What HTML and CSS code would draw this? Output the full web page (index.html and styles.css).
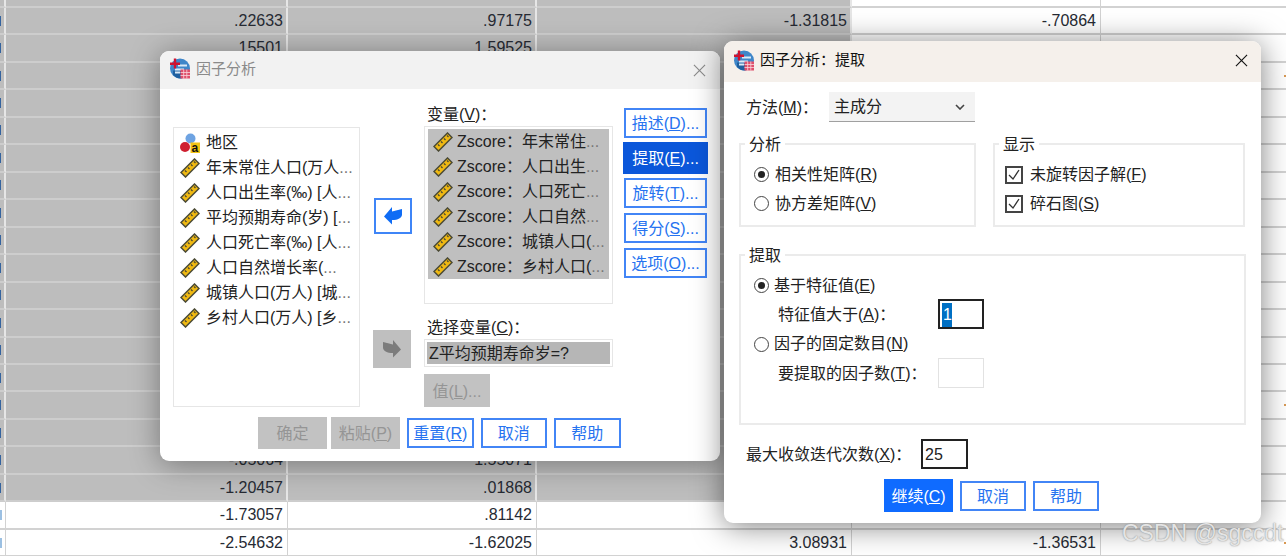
FILE: index.html
```html
<!DOCTYPE html>
<html lang="zh">
<head>
<meta charset="utf-8">
<title>因子分析</title>
<link rel="stylesheet" href="styles.css">
</head>
<body>
<svg class="sprite" aria-hidden="true">
  <symbol id="ruler" viewBox="0 0 20 20">
    <path d="M1 14.500 14.500 1l4.500 4.500L5.500 19z" fill="#f0b912" stroke="#4b4a35" stroke-width="1.500"/>
    <path d="M5 12.500l1.500 1.500M8 9.500l1.500 1.500M11 6.500l1.500 1.500M14 3.500l1.500 1.500" stroke="#4b4a35" stroke-width="1.300" fill="none"/>
  </symbol>
  <symbol id="nominal" viewBox="0 0 20 20">
    <circle cx="10.500" cy="5.500" r="5" fill="#6ea3e2"/>
    <circle cx="5" cy="14" r="5" fill="#cf1f30"/>
    <rect x="10.500" y="9.500" width="9.500" height="10.500" fill="#f3c414"/>
    <text x="11.500" y="18.500" font-size="12" font-weight="700" font-family="Liberation Sans" fill="#111">a</text>
  </symbol>
  <symbol id="app" viewBox="0 0 20 20">
    <circle cx="10" cy="10" r="10" fill="#3f86c9"/>
    <path d="M3 16a10 10 0 0 0 9 3.800V12H3z" fill="#1f5f9f"/>
    <path d="M8 6h9v2H8zM5 10h9v2H5zM5 13h5v2H5z" fill="#dbe9f6"/>
    <path d="M0 4h10v2.400H0zM3.800 0h2.400v10H3.800z" fill="#cf1230"/>
    <rect x="10.500" y="11" width="9.500" height="9" fill="#df4f6b"/>
    <path d="M10.500 14h9.500M10.500 17h9.500M13.700 11v9M16.800 11v9" stroke="#f7d5dc" stroke-width=".8"/>
  </symbol>
  <symbol id="back" viewBox="0 0 38 36">
    <path d="M10 18.500 18 9v4.500l10-2.500v5.500c0 3.500-4 5.500-10 5.500v4.500z"/>
  </symbol>
</svg>

<main class="sheet">
  <div class="row sel"><i class="c0"></i><i></i><i></i><i></i><i class="plain"></i><i class="plain"></i></div>
  <div class="row sel"><i class="c0"><b class="mark"></b></i><i>.22633</i><i>.97175</i><i>-1.31815</i><i class="plain">-.70864</i><i class="plain"></i></div>
  <div class="row sel"><i class="c0"><b class="mark"></b></i><i>.15501</i><i>1.59525</i><i></i><i class="plain"></i><i class="plain"></i></div>
  <div class="row sel"><i class="c0"><b class="mark"></b></i><i></i><i></i><i></i><i class="plain"></i><i class="plain"><b class="tick"></b></i></div>
  <div class="row sel"><i class="c0"><b class="mark"></b></i><i></i><i></i><i></i><i class="plain"></i><i class="plain"></i></div>
  <div class="row sel"><i class="c0"><b class="mark"></b></i><i></i><i></i><i></i><i class="plain"></i><i class="plain"></i></div>
  <div class="row sel"><i class="c0"><b class="mark"></b></i><i></i><i></i><i></i><i class="plain"></i><i class="plain"></i></div>
  <div class="row sel"><i class="c0"><b class="mark"></b></i><i></i><i></i><i></i><i class="plain"></i><i class="plain"></i></div>
  <div class="row sel"><i class="c0"><b class="mark"></b></i><i></i><i></i><i></i><i class="plain"></i><i class="plain"></i></div>
  <div class="row sel"><i class="c0"><b class="mark"></b></i><i></i><i></i><i></i><i class="plain"></i><i class="plain"></i></div>
  <div class="row sel"><i class="c0"><b class="mark"></b></i><i></i><i></i><i></i><i class="plain"></i><i class="plain"></i></div>
  <div class="row sel"><i class="c0"><b class="mark"></b></i><i></i><i></i><i></i><i class="plain"></i><i class="plain"></i></div>
  <div class="row sel"><i class="c0"><b class="mark"></b></i><i></i><i></i><i></i><i class="plain"></i><i class="plain"></i></div>
  <div class="row sel"><i class="c0"><b class="mark"></b></i><i></i><i></i><i></i><i class="plain"></i><i class="plain"></i></div>
  <div class="row sel"><i class="c0"><b class="mark"></b></i><i></i><i></i><i></i><i class="plain"></i><i class="plain"></i></div>
  <div class="row sel"><i class="c0"><b class="mark"></b></i><i></i><i></i><i></i><i class="plain"></i><i class="plain"><b class="tick"></b></i></div>
  <div class="row sel"><i class="c0"><b class="mark"></b></i><i></i><i></i><i></i><i class="plain"></i><i class="plain"></i></div>
  <div class="row sel"><i class="c0"><b class="mark"></b></i><i>-.05064</i><i>1.55071</i><i></i><i class="plain"></i><i class="plain"></i></div>
  <div class="row sel"><i class="c0"><b class="mark"></b></i><i>-1.20457</i><i>.01868</i><i></i><i class="plain"></i><i class="plain"></i></div>
  <div class="row"><i class="c0"><b class="mark"></b></i><i>-1.73057</i><i>.81142</i><i></i><i></i><i></i></div>
  <div class="row"><i class="c0"><b class="mark"></b></i><i>-2.54632</i><i>-1.62025</i><i>3.08931</i><i>-1.36531</i><i><b class="tick"></b></i></div>
</main>

<section class="dialog main-dialog">
  <header class="titlebar inactive">
    <svg class="app-icon"><use href="#app"/></svg>
    <span class="title">因子分析</span>
    <svg class="close" viewBox="0 0 14 14"><path d="M1 1l12 12M13 1 1 13"/></svg>
  </header>
  <div class="fa-body">
    <ul class="listbox source">
      <li><svg class="var"><use href="#nominal"/></svg>地区</li>
      <li><svg class="var"><use href="#ruler"/></svg>年末常住人口(万人<em>...</em></li>
      <li><svg class="var"><use href="#ruler"/></svg>人口出生率(‰) [人<em>...</em></li>
      <li><svg class="var"><use href="#ruler"/></svg>平均预期寿命(岁) [<em>...</em></li>
      <li><svg class="var"><use href="#ruler"/></svg>人口死亡率(‰) [人<em>...</em></li>
      <li><svg class="var"><use href="#ruler"/></svg>人口自然增长率(<em>...</em></li>
      <li><svg class="var"><use href="#ruler"/></svg>城镇人口(万人) [城<em>...</em></li>
      <li><svg class="var"><use href="#ruler"/></svg>乡村人口(万人) [乡<em>...</em></li>
    </ul>
    <div class="arrows">
      <button class="arrow on"><svg><use href="#back"/></svg></button>
      <button class="arrow off"><svg class="flip"><use href="#back"/></svg></button>
    </div>
    <div class="vars">
      <div class="lbl">变量(<u>V</u>)：</div>
      <ul class="listbox target">
        <li><svg class="var"><use href="#ruler"/></svg>Zscore：年末常住<em>...</em></li>
        <li><svg class="var"><use href="#ruler"/></svg>Zscore：人口出生<em>...</em></li>
        <li><svg class="var"><use href="#ruler"/></svg>Zscore：人口死亡<em>...</em></li>
        <li><svg class="var"><use href="#ruler"/></svg>Zscore：人口自然<em>...</em></li>
        <li><svg class="var"><use href="#ruler"/></svg>Zscore：城镇人口(<em>...</em></li>
        <li><svg class="var"><use href="#ruler"/></svg>Zscore：乡村人口(<em>...</em></li>
      </ul>
      <div class="lbl second">选择变量(<u>C</u>)：</div>
      <div class="selection"><span>Z平均预期寿命岁=?</span></div>
      <button class="btn dis value">值(<u>L</u>)...</button>
    </div>
    <div class="side">
      <button class="btn side-btn">描述(<u>D</u>)...</button>
      <button class="btn side-btn active">提取(<u>E</u>)...</button>
      <button class="btn side-btn">旋转(<u>T</u>)...</button>
      <button class="btn side-btn">得分(<u>S</u>)...</button>
      <button class="btn side-btn">选项(<u>O</u>)...</button>
    </div>
  </div>
  <footer class="fa-foot">
    <button class="btn dis wide first">确定</button>
    <button class="btn dis wide">粘贴(<u>P</u>)</button>
    <button class="btn norm">重置(<u>R</u>)</button>
    <button class="btn norm">取消</button>
    <button class="btn norm">帮助</button>
  </footer>
</section>

<section class="dialog sub-dialog">
  <header class="titlebar focus">
    <svg class="app-icon"><use href="#app"/></svg>
    <span class="title">因子分析：提取</span>
    <svg class="close dark" viewBox="0 0 14 14"><path d="M1 1l12 12M13 1 1 13"/></svg>
  </header>
  <div class="ex-body">
    <div class="method">
      <span class="method-lbl">方法(<u>M</u>)：</span>
      <div class="dropdown">主成分<svg viewBox="0 0 10 6"><path d="M1 1l4 4 4-4"/></svg></div>
    </div>
    <div class="groups">
      <div class="group g-analysis">
        <div class="legend">分析</div>
        <div class="opts">
          <div class="opt"><span class="radio on"></span>相关性矩阵(<u>R</u>)</div>
          <div class="opt"><span class="radio"></span>协方差矩阵(<u>V</u>)</div>
        </div>
      </div>
      <div class="group g-display">
        <div class="legend">显示</div>
        <div class="opts">
          <div class="opt"><svg class="check" viewBox="0 0 18 18"><path class="box" d="M1 1h16v16H1z"/><path d="M4 9l4 4 6-9"/></svg>未旋转因子解(<u>F</u>)</div>
          <div class="opt"><svg class="check" viewBox="0 0 18 18"><path class="box" d="M1 1h16v16H1z"/><path d="M4 9l4 4 6-9"/></svg>碎石图(<u>S</u>)</div>
        </div>
      </div>
    </div>
    <div class="group g-extract">
      <div class="legend">提取</div>
      <div class="ex-rows">
        <div class="opt tight"><span class="radio on"></span>基于特征值(<u>E</u>)</div>
        <div class="opt indent"><span class="ex-lbl">特征值大于(<u>A</u>)：</span><span class="field strong"><span class="hl">1</span></span></div>
        <div class="opt tight"><span class="radio"></span>因子的固定数目(<u>N</u>)</div>
        <div class="opt indent"><span class="ex-lbl">要提取的因子数(<u>T</u>)：</span><span class="field"></span></div>
      </div>
    </div>
    <div class="iter">
      <span class="iter-lbl">最大收敛迭代次数(<u>X</u>)：</span><span class="field strong">25</span>
    </div>
    <footer class="ex-foot">
      <button class="btn primary">继续(<u>C</u>)</button>
      <button class="btn norm">取消</button>
      <button class="btn norm">帮助</button>
    </footer>
  </div>
</section>

<div class="watermark">CSDN @sgccdt</div>
</body>
</html>
```

FILE: styles.css
```css
* { box-sizing: border-box; }

html, body {
  margin: 0;
  height: 556px;
  overflow: hidden;
  background: #fff;
}

body {
  position: relative;
  width: 1286px;
  font: 16px/20px "Liberation Sans", "Noto Sans CJK SC", sans-serif;
  color: #222;
}

.sprite { display: none; }

/* Data sheet behind the dialogs */
.sheet {
  margin-top: -19.6px;
  display: grid;
  grid-auto-rows: 27.47px;
}

.row {
  display: grid;
  grid-template-columns: 6px 282px 249px 315px 249px 1fr;
}

.row i {
  font-style: normal;
  display: flex;
  align-items: center;
  justify-content: flex-end;
  padding-right: 4px;
  overflow: hidden;
  white-space: nowrap;
  border-right: 1px solid #d2d2d2;
  border-bottom: 2px solid #d2d2d2;
  background: #fff;
  color: #262a33;
}

.row .c0 {
  padding-right: 0;
  justify-content: flex-start;
}

.row.sel i {
  padding-right: 3px;
  background: #bdbdbd;
  border-right: 2px solid #e6e6e6;
  border-bottom-color: #cdcdcd;
}

.row.sel .plain {
  padding-right: 4px;
  background: #fff;
  border-right: 1px solid #d2d2d2;
  border-bottom-color: #d2d2d2;
}

.row i:last-child,
.row.sel i:last-child {
  border-right: 0;
  padding-right: 0;
}

.mark {
  width: 1.5px;
  height: 10px;
  background: #9cc0e2;
}

.sel .mark { background: #34639f; }

.tick {
  width: 2px;
  height: 2px;
  background: #d99a55;
}

/* Dialog windows */
.dialog {
  position: absolute;
  background: #fff;
  border-radius: 9px;
  overflow: hidden;
  box-shadow: 0 3px 30px rgba(0, 0, 0, .38);
}

.main-dialog {
  left: 160px;
  top: 51px;
  width: 560px;
  height: 410px;
}

.sub-dialog {
  left: 724px;
  top: 41px;
  width: 537px;
  height: 482px;
  box-shadow: 0 3px 30px rgba(0, 0, 0, .5);
}

.titlebar {
  display: flex;
  align-items: center;
  font-size: 15px;
}

.titlebar.inactive {
  height: 38px;
  background: #f2f2f2;
  color: #8a8a8a;
  padding: 0 14px 3px 10px;
}

.titlebar.focus {
  height: 41px;
  background: #f5f0eb;
  color: #111;
  padding: 0 13px 3px 10px;
}

.app-icon {
  width: 20px;
  height: 21px;
  margin-right: 6px;
  flex: none;
}

.title { flex: 1; }

.close {
  width: 13px;
  height: 13px;
  margin-top: 3px;
  fill: none;
  stroke: #8a8a8a;
  stroke-width: 1.2;
}

.close.dark {
  margin-top: 1px;
  stroke: #111;
}

/* Main dialog */
.fa-body {
  display: flex;
  align-items: flex-start;
  height: 318px;
  padding: 16px 0 0 13px;
}

.listbox {
  list-style: none;
  margin: 0;
  background: #fff;
  border: 1.5px solid #e6e6e6;
}

.listbox li {
  display: flex;
  align-items: center;
  height: 25px;
  padding-top: 1.5px;
  white-space: nowrap;
  overflow: hidden;
}

.listbox em { font-style: normal; color: #777; }

.var {
  width: 20px;
  height: 20px;
  margin-right: 6px;
  flex: none;
}

.source {
  width: 187px;
  height: 280px;
  margin-top: 22px;
  padding: 1.5px 0 0 6px;
}

.arrows {
  width: 39px;
  margin-left: 13px;
  display: flex;
  flex-direction: column;
  gap: 96px;
  padding-top: 93px;
}

.arrow {
  display: block;
  padding: 0;
  height: 36px;
  width: 38px;
  background: #fff;
}

.arrow svg { display: block; width: 100%; height: 100%; }

.arrow.on {
  margin-left: 1px;
  border: 2px solid #3f85f7;
  fill: #0f6cf5;
}

.arrow.on svg { margin: -2px; width: 38px; height: 36px; }

.arrow.off {
  border: 0;
  height: 38px;
  background: #bfbfbf;
  fill: #7c7c7c;
}

.flip { transform: scaleX(-1); }

.vars {
  width: 189px;
  margin-left: 12px;
}

.lbl {
  height: 21px;
  padding-left: 3px;
}

.lbl.second {
  height: 21px;
  margin-top: 14px;
}

.target {
  width: 189px;
  height: 178px;
  padding: 2px 3px;
}

.target li {
  background: #bfbfbf;
  padding-left: 5px;
}

.target .var { margin-right: 4px; }

.selection {
  height: 28px;
  padding: 2px;
  border: 1px solid #e6e6e6;
}

.selection span {
  display: block;
  height: 22px;
  line-height: 24px;
  padding-left: 2px;
  background: #b6b6b6;
}

.value {
  display: block;
  width: 66px;
  height: 33px;
  margin-top: 7px;
}

.btn {
  padding: 2px 0 0;
  font: inherit;
  white-space: nowrap;
  text-align: center;
  background: #fff;
  color: #2673f0;
  border: 2px solid #4285f6;
}

.btn.dis {
  background: #c2c2c2;
  border: 0;
  color: #959595;
}

.side {
  margin-left: 10px;
  margin-top: 3px;
  width: 85px;
  display: flex;
  flex-direction: column;
  gap: 4px;
  align-items: center;
}

.side-btn {
  width: 83px;
  height: 30px;
  margin-bottom: 1px;
}

.side-btn.active {
  width: 85px;
  height: 32px;
  margin: -1px 0 0;
  border: 0;
  background: #0b57da;
  color: #fff;
}

.fa-foot {
  display: flex;
  align-items: center;
  gap: 7px;
  padding-left: 98px;
  margin-top: 10px;
}

.norm {
  width: 66.5px;
  height: 30px;
}

.btn.wide {
  width: 69px;
  height: 32px;
}

.btn.first { margin-right: -3px; }

/* Extraction dialog */
.ex-body { padding: 10px 15px 0; }

.method {
  display: flex;
  align-items: center;
  padding-left: 7px;
}

.method-lbl {
  width: 83px;
  padding-top: 2px;
}

.dropdown {
  width: 146px;
  height: 30px;
  display: flex;
  align-items: center;
  justify-content: space-between;
  padding: 0 10px 0 5px;
  background: #f3f3f3;
  border-bottom: 1.5px solid #a0a0a0;
}

.dropdown svg {
  width: 10px;
  height: 6px;
  fill: none;
  stroke: #444;
  stroke-width: 1.6;
}

.groups {
  display: flex;
  gap: 17px;
  margin-top: 21px;
}

.group { border: 2px solid #ebebeb; }

.g-analysis { width: 237px; height: 84px; padding: 0 0 0 13px; }
.g-display { width: 252px; height: 84px; padding: 0 0 0 10px; }
.g-extract { height: 171px; margin-top: 27px; padding: 0 0 0 13px; }

.g-extract .legend,
.g-analysis .legend { margin-left: -9px; }
.g-display .legend { margin-left: -6px; }

.legend {
  width: fit-content;
  height: 20px;
  margin-top: -10px;
  padding: 0 4px;
  background: #fff;
}

.opts {
  display: grid;
  grid-auto-rows: 29px;
  margin-top: 5px;
}

.opt {
  display: flex;
  align-items: center;
}

.radio {
  width: 15px;
  height: 15px;
  margin-right: 6px;
  flex: none;
  border: 1.5px solid #444;
  border-radius: 50%;
  padding: 3px;
  background-clip: content-box;
}

.radio.on { background-color: #222; }

.check {
  width: 18px;
  height: 18px;
  margin-right: 7px;
  flex: none;
  fill: none;
  stroke: #333;
  stroke-width: 1.3;
}

.check .box {
  stroke: #444;
  stroke-width: 2;
}

.ex-rows {
  display: grid;
  grid-auto-rows: 29.33px;
  margin-top: 5px;
}

.tight .radio { margin-right: 5px; }

.indent { padding-left: 24px; }

.indent .field { margin-bottom: 2px; }

.ex-lbl { width: 160px; padding-top: 1px; }

.field {
  display: flex;
  align-items: center;
  flex: none;
  width: 46px;
  height: 30px;
  padding: 1px 0 0 2px;
  border: 1.5px solid #e2e2e2;
}

.field.strong { border: 2px solid #222; }

.hl {
  background: #0070c4;
  color: #fff;
  padding: 0 1px;
  width: 10px;
  height: 24px;
  line-height: 24px;
}

.iter {
  display: flex;
  align-items: center;
  padding-left: 7px;
  margin-top: 14px;
}

.iter-lbl { width: 175px; padding-top: 2px; }

.iter .field { width: 47px; }

.ex-foot {
  display: flex;
  align-items: center;
  gap: 7px;
  margin-top: 10px;
  padding-left: 145px;
}

.ex-foot .norm { width: 66px; }

.btn.primary {
  width: 69px;
  height: 33px;
  border: 0;
  background: #0f6bff;
  color: #fff;
}

.watermark {
  position: absolute;
  left: 1122px;
  top: 520px;
  font-size: 23px;
  line-height: 26px;
  white-space: nowrap;
  color: #e4e4e4;
  text-shadow: 0 0 1.5px #777;
}
```
